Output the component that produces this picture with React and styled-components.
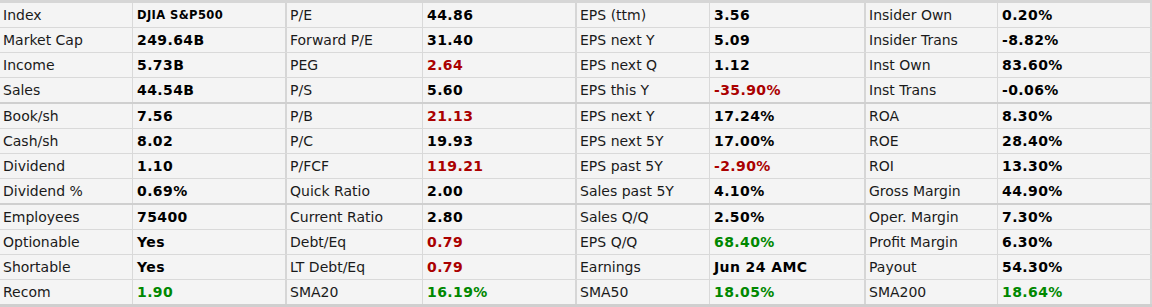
import React from "react";
import styled, { createGlobalStyle } from "styled-components";

const GlobalStyle = createGlobalStyle`
  body {
    margin: 0;
    background: #ffffff;
  }
`;

const Table = styled.div`
  width: 1152px;
  background: #f4f4f4;
  border-top: 3px solid #d6d6d6;
  font-family: "DejaVu Sans", Verdana, sans-serif;
`;

const Row = styled.div`
  display: grid;
  grid-template-columns: 133px 154px 136px 154px 133px 156px 132px 154px;
  height: 24px;
  border-bottom: ${(p) => p.$edge}px solid ${(p) => (p.$edge > 1 ? "#cfcfcf" : "#d9d9d9")};
`;

const Label = styled.div`
  display: flex;
  align-items: center;
  padding-left: 3px;
  font-size: 14px;
  color: #1a1a1a;
  white-space: nowrap;
  border-right: 1px solid #d9d9d9;
  border-left: ${(p) => (p.$first ? "0" : "2px solid #d6d6d6")};
  margin-left: ${(p) => (p.$first ? "0" : "-2px")};
`;

const Value = styled.div`
  display: flex;
  align-items: center;
  padding-left: 4px;
  font-size: ${(p) => (p.$small ? "11.5px" : "14px")};
  font-weight: bold;
  letter-spacing: 0.4px;
  white-space: nowrap;
  color: ${(p) => (p.$tone === "red" ? "#aa0000" : p.$tone === "green" ? "#008800" : "#000")};
  border-right: ${(p) => (p.$last ? "2px solid #d6d6d6" : "0")};
`;

const rows = [
  [["Index", "DJIA S&P500", "", true], ["P/E", "44.86"], ["EPS (ttm)", "3.56"], ["Insider Own", "0.20%"]],
  [["Market Cap", "249.64B"], ["Forward P/E", "31.40"], ["EPS next Y", "5.09"], ["Insider Trans", "-8.82%"]],
  [["Income", "5.73B"], ["PEG", "2.64", "red"], ["EPS next Q", "1.12"], ["Inst Own", "83.60%"]],
  [["Sales", "44.54B"], ["P/S", "5.60"], ["EPS this Y", "-35.90%", "red"], ["Inst Trans", "-0.06%"]],
  [["Book/sh", "7.56"], ["P/B", "21.13", "red"], ["EPS next Y", "17.24%"], ["ROA", "8.30%"]],
  [["Cash/sh", "8.02"], ["P/C", "19.93"], ["EPS next 5Y", "17.00%"], ["ROE", "28.40%"]],
  [["Dividend", "1.10"], ["P/FCF", "119.21", "red"], ["EPS past 5Y", "-2.90%", "red"], ["ROI", "13.30%"]],
  [["Dividend %", "0.69%"], ["Quick Ratio", "2.00"], ["Sales past 5Y", "4.10%"], ["Gross Margin", "44.90%"]],
  [["Employees", "75400"], ["Current Ratio", "2.80"], ["Sales Q/Q", "2.50%"], ["Oper. Margin", "7.30%"]],
  [["Optionable", "Yes"], ["Debt/Eq", "0.79", "red"], ["EPS Q/Q", "68.40%", "green"], ["Profit Margin", "6.30%"]],
  [["Shortable", "Yes"], ["LT Debt/Eq", "0.79", "red"], ["Earnings", "Jun 24 AMC"], ["Payout", "54.30%"]],
  [["Recom", "1.90", "green"], ["SMA20", "16.19%", "green"], ["SMA50", "18.05%", "green"], ["SMA200", "18.64%", "green"]],
];

const edgeFor = (i) => (i === 11 ? 3 : i === 3 || i === 7 ? 2 : 1);

export default function App() {
  return (
    <>
      <GlobalStyle />
      <Table>
        {rows.map((row, i) => (
          <Row key={i} $edge={edgeFor(i)}>
            {row.map(([label, value, tone, small], j) => (
              <React.Fragment key={j}>
                <Label $first={j === 0}>{label}</Label>
                <Value $tone={tone} $small={small} $last={j === 3}>
                  {value}
                </Value>
              </React.Fragment>
            ))}
          </Row>
        ))}
      </Table>
    </>
  );
}
